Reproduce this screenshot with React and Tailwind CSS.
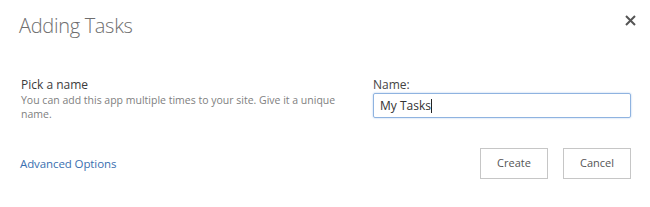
import React from "react";

export default function App() {
  return (
    <div className="w-[650px] h-[207px] bg-white relative" style={{ fontFamily: '"Open Sans", "Noto Sans", sans-serif' }}>
      <div className="flex items-start justify-between pl-[19px] pr-[10px] pt-[11px]">
        <h1 className="text-[20px] leading-[30px] font-light text-[#6e6e6e] tracking-[-0.3px]">Adding Tasks</h1>
        <button className="mt-[-1px] w-[20px] h-[20px] flex items-center justify-center text-[#555]">
          <svg width="11" height="11" viewBox="0 0 11 11">
            <path d="M1 1 L10 10 M10 1 L1 10" stroke="#555" strokeWidth="2" />
          </svg>
        </button>
      </div>
      <div className="flex pl-[21px] pr-[19px] mt-[36px]">
        <div className="w-[352px]">
          <div className="text-[12px] leading-[15px] text-[#3c3c3c]">Pick a name</div>
          <div className="text-[10.5px] leading-[14px] text-[#808080] w-[330px] mt-[1px]">
            You can add this app multiple times to your site. Give it a unique name.
          </div>
        </div>
        <div className="flex-1">
          <div className="text-[12px] leading-[15px] text-[#444]">Name:</div>
          <div className="mt-[1px] h-[25px] border border-[#8fb3e0] rounded-[2px] shadow-[0_0_2px_#a9c7ea] flex items-center pl-[6px] text-[12px] text-[#333]">
            My Tasks<span className="inline-block w-px h-[14px] bg-[#222]"></span>
          </div>
        </div>
      </div>
      <div className="flex items-center justify-between pl-[20px] pr-[19px] mt-[27px]">
        <a className="text-[11.5px] text-[#3a6fb0] mt-[1px] tracking-[-0.1px]">Advanced Options</a>
        <div className="flex gap-[15px]">
          <button className="w-[68px] h-[31px] border border-[#c6c6c6] text-[11px] text-[#555] bg-white">Create</button>
          <button className="w-[68px] h-[31px] border border-[#c6c6c6] text-[11px] text-[#555] bg-white">Cancel</button>
        </div>
      </div>
    </div>
  );
}
